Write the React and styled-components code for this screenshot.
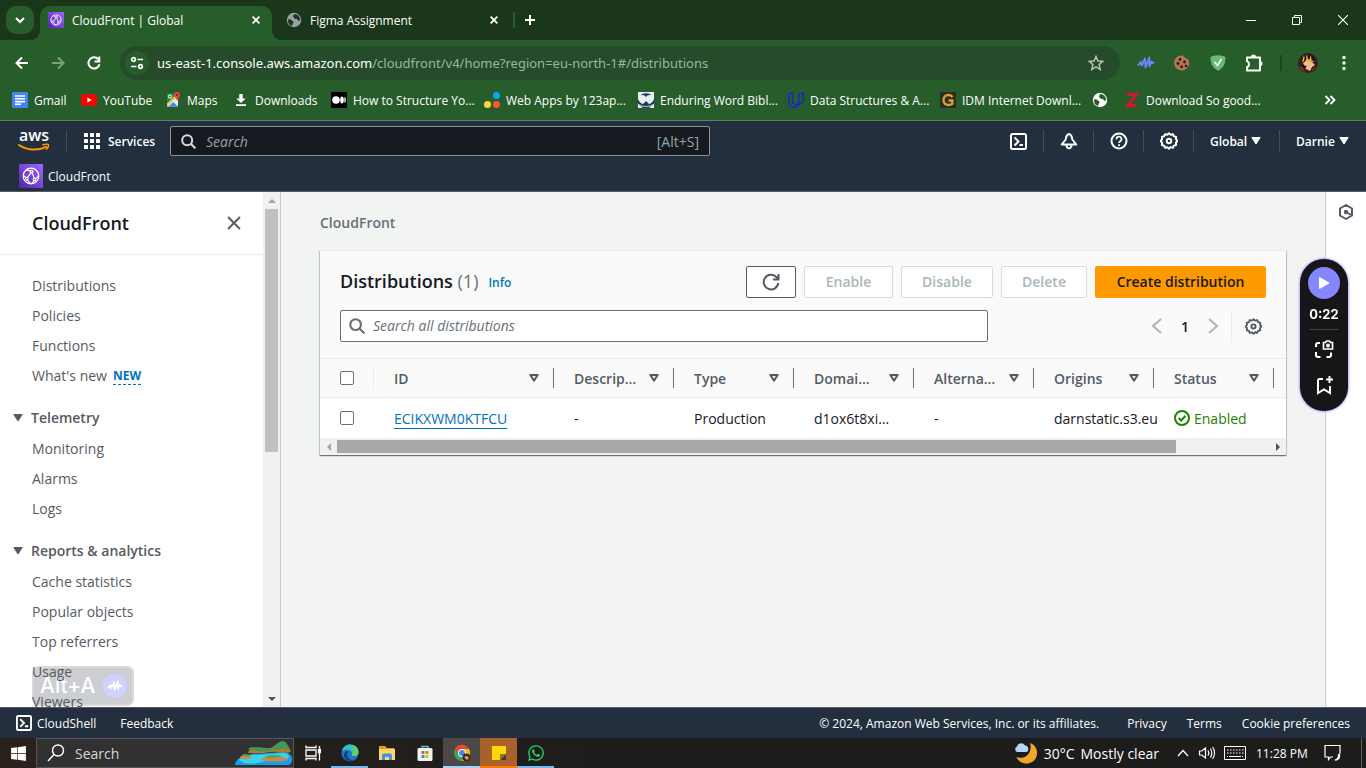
import React from "react";
import styled, { createGlobalStyle, css } from "styled-components";
import { FaWindows, FaWhatsapp } from "react-icons/fa";

const ember = `"Open Sans", "Noto Sans", sans-serif`;
const segoe = `"Open Sans", "Noto Sans", sans-serif`;

const GlobalStyle = createGlobalStyle`
  *, *::before, *::after { box-sizing: border-box; }
  body { margin: 0; overflow: hidden; font-family: ${ember}; color: #16191f; }
  button, input { font: inherit; color: inherit; margin: 0; }
  button { border: 0; padding: 0; background: none; }
  a { color: inherit; text-decoration: none; }
  svg { display: block; flex: none; }
  ul { list-style: none; margin: 0; padding: 0; }
`;

const Screen = styled.div`
  display: flex;
  flex-direction: column;
  height: 100vh;
`;

/* ---------- browser ---------- */

const Browser = styled.header`
  flex: none;
  font-family: ${segoe};
  font-size: 12px;
  color: #fff;
  background: #275d2b;
  border-bottom: 1px solid #57865a;
`;

const TabStrip = styled.div`
  display: flex;
  align-items: flex-end;
  height: 40px;
  background: #1b371b;
`;

const TabSearch = styled.button`
  display: grid;
  place-items: center;
  width: 28px;
  height: 28px;
  margin: 0 6px 6px;
  border-radius: 10px;
  background: #275d2b;
`;

const Tab = styled.div`
  position: relative;
  display: flex;
  align-items: center;
  gap: 8px;
  width: ${(p) => (p.$active ? 232 : 241)}px;
  height: 34px;
  padding: 0 ${(p) => (p.$active ? 9 : 12)}px 6px ${(p) => (p.$active ? 8 : 14)}px;
  border-radius: 10px 10px 0 0;
  ${(p) =>
    p.$active &&
    css`
      background: #275d2b;
      &::before,
      &::after {
        content: "";
        position: absolute;
        bottom: 0;
        width: 10px;
        height: 10px;
      }
      &::before {
        left: -10px;
        background: radial-gradient(circle at 0 0, transparent 10px, #275d2b 10px);
      }
      &::after {
        right: -10px;
        background: radial-gradient(circle at 100% 0, transparent 10px, #275d2b 10px);
      }
    `}
`;

const TabTitle = styled.span`
  flex: 1;
  white-space: nowrap;
`;

const TabDivider = styled.span`
  width: 2px;
  height: 16px;
  margin-bottom: 12px;
  background: #275d2b;
`;

const PlainButton = styled.button`
  display: grid;
  place-items: center;
  width: ${(p) => p.$w || 36}px;
  height: ${(p) => p.$h || 34}px;
`;

const WindowControls = styled.div`
  display: flex;
  margin-left: auto;
`;

const Toolbar = styled.div`
  display: flex;
  align-items: center;
  height: 46px;
  padding: 0 4px;
`;

const AddressBar = styled.div`
  display: flex;
  align-items: center;
  flex: 1;
  height: 34px;
  margin: 0 8px;
  padding: 0 8px 0 5px;
  border-radius: 17px;
  background: #264b2b;
`;

const SiteInfo = styled.span`
  display: grid;
  place-items: center;
  width: 24px;
  height: 24px;
  margin-right: 8px;
  border-radius: 50%;
  background: #275d2b;
`;

const Url = styled.span`
  flex: 1;
  white-space: nowrap;
  color: #9db59f;
  font-family: "Noto Sans", sans-serif;
  font-size: 13px;
  b {
    font-weight: 400;
    color: #fff;
  }
`;

const ToolDivider = styled.span`
  width: 2px;
  height: 16px;
  margin: 0 8px;
  background: #1b471f;
`;

const Bookmarks = styled.nav`
  display: flex;
  align-items: center;
  height: 34px;
  padding: 0 30px 6px 12px;
`;

const Bookmark = styled.a`
  display: flex;
  align-items: center;
  gap: 6px;
  width: ${(p) => p.$w}px;
  white-space: nowrap;
`;

const More = styled.button`
  margin-left: auto;
`;

/* ---------- AWS header ---------- */

const ConsoleHeader = styled.header`
  flex: none;
  background: #232f3e;
  border-bottom: 1px solid #545b64;
  color: #fff;
  font-size: 12px;
  font-weight: 600;
`;

const HeaderRow = styled.div`
  display: flex;
  align-items: center;
  height: 40px;
  padding-left: 18px;
`;

const Rule = styled.span`
  width: 1px;
  height: 22px;
  background: #414d5c;
`;

const LogoRule = styled(Rule)`
  margin-left: 16px;
`;

const Services = styled.button`
  display: flex;
  align-items: center;
  gap: 8px;
  width: 86px;
  margin-left: 17px;
`;

const HeaderSearch = styled.label`
  display: flex;
  align-items: center;
  flex: 0 1 540px;
  height: 30px;
  padding: 0 10px;
  gap: 10px;
  border: 1px solid #879596;
  border-radius: 2px;
  background: #16191f;
  color: #95a5a6;
  font-size: 14px;
  font-weight: 400;
  input {
    flex: 1;
    min-width: 0;
    padding: 0;
    border: 0;
    outline: 0;
    background: none;
  }
  input::placeholder {
    color: #95a5a6;
    font-style: italic;
    opacity: 1;
  }
`;

const HeaderActions = styled.div`
  display: flex;
  align-items: center;
  margin-left: auto;
`;

const HeaderMenu = styled.button`
  display: flex;
  align-items: center;
  gap: 4px;
  width: ${(p) => p.$w}px;
  height: 34px;
  padding-left: 16px;
`;

const Favorite = styled.a`
  display: flex;
  align-items: center;
  gap: 5px;
  height: 30px;
  padding-left: 19px;
  font-weight: 500;
`;

/* ---------- console body ---------- */

const Body = styled.div`
  display: flex;
  flex: 1;
  min-height: 0;
`;

const Sidebar = styled.aside`
  position: relative;
  display: flex;
  flex: 0 0 281px;
  border-right: 1px solid #c8cccd;
  background: #fff;
  color: #545b64;
  font-size: 14px;
`;

const SidebarContent = styled.div`
  flex: 1;
  overflow: hidden;
`;

const SidebarHeader = styled.div`
  display: flex;
  align-items: center;
  justify-content: space-between;
  height: 63px;
  padding: 0 20px 0 32px;
  border-bottom: 1px solid #eaeded;
`;

const SidebarTitle = styled.h2`
  margin: 0;
  font-size: 18px;
  font-weight: 600;
  color: #16191f;
`;

const SideNav = styled.nav`
  position: relative;
  z-index: 1;
  padding-top: 15px;
`;

const NavLink = styled.a`
  display: flex;
  align-items: center;
  gap: 6px;
  height: 30px;
  padding-left: 32px;
`;

const NewTag = styled.span`
  margin-top: 2px;
  border-bottom: 1px dashed #0073bb;
  color: #0073bb;
  font-size: 12px;
  font-weight: 700;
  line-height: 16px;
`;

const SectionToggle = styled.button`
  display: flex;
  align-items: center;
  gap: 8px;
  height: 31px;
  margin-top: 12px;
  padding-left: 13px;
  font-weight: 600;
`;

const VScroll = styled.div`
  display: flex;
  flex-direction: column;
  align-items: center;
  width: 17px;
  background: #f1f1f1;
`;

const ScrollArrow = styled.span`
  display: grid;
  place-items: center;
  width: 17px;
  height: 17px;
`;

const VThumb = styled.span`
  width: 13px;
  height: 243px;
  margin-bottom: auto;
  background: #c1c1c1;
`;

const ShortcutHint = styled.div`
  position: absolute;
  left: 32px;
  bottom: 1px;
  display: flex;
  align-items: center;
  gap: 8px;
  height: 40px;
  width: 102px;
  padding-left: 6px;
  border: 2px solid #d9d9db;
  border-radius: 7px;
  background: #cdced1;
  color: #fff;
  font: 500 21px/36px "Inter", sans-serif;
`;

const HintBadge = styled.span`
  display: grid;
  place-items: center;
  width: 24px;
  height: 24px;
  border-radius: 50%;
  background: #cfd1ff;
`;

const Main = styled.main`
  flex: 1;
  min-width: 0;
  padding: 20px 39px 0;
  background: #f2f3f3;
`;

const Breadcrumb = styled.a`
  display: block;
  height: 22px;
  margin-bottom: 16px;
  color: #687078;
  font-size: 14px;
  font-weight: 600;
  line-height: 22px;
`;

const Card = styled.section`
  border-top: 1px solid #eaeded;
  background: #fff;
  box-shadow: 0 1px 1px rgba(0, 28, 36, 0.4), 1px 1px 1px rgba(0, 28, 36, 0.15), -1px 1px 1px rgba(0, 28, 36, 0.15);
  font-size: 14px;
`;

const CardHeader = styled.div`
  display: flex;
  flex-direction: column;
  gap: 12px;
  padding: 15px 20px 16px;
  background: #fafafa;
  border-bottom: 1px solid #eaeded;
`;

const CardRow = styled.div`
  display: flex;
  align-items: center;
  gap: 8px;
  height: 32px;
`;

const CardTitle = styled.h1`
  margin: 0;
  font-size: 18px;
  font-weight: 600;
  line-height: 30px;
  height: 32px;
  span {
    color: #687078;
    font-weight: 400;
  }
`;

const InfoLink = styled.a`
  margin: 0 auto 0 2px;
  color: #0073bb;
  font-size: 12px;
  font-weight: 600;
`;

const ActionButton = styled.button`
  display: grid;
  place-items: center;
  width: ${(p) => p.$w}px;
  height: 32px;
  padding-bottom: 1px;
  border: 1px solid #545b64;
  border-radius: 2px;
  background: #fff;
  color: #545b64;
  font-weight: 600;
  &:disabled {
    border-color: #d5dbdb;
    color: #aab7b8;
  }
  ${(p) =>
    p.$primary &&
    css`
      border-color: #ff9900;
      background: #ff9900;
      color: #16191f;
    `}
`;

const FilterBox = styled.label`
  display: flex;
  align-items: center;
  gap: 8px;
  flex: 0 1 648px;
  height: 32px;
  padding: 0 8px;
  border: 1px solid #687078;
  border-radius: 2px;
  background: #fff;
  input {
    flex: 1;
    padding: 0 0 1px;
    border: 0;
    outline: 0;
    background: none;
  }
  input::placeholder {
    color: #687078;
    font-style: italic;
    opacity: 1;
  }
`;

const Pager = styled.div`
  display: flex;
  align-items: center;
  margin-left: auto;
  font-weight: 600;
`;

const PagerRule = styled.span`
  width: 1px;
  height: 32px;
  margin: 0 8px 0 4px;
  background: #eaeded;
`;

const GearGrey = styled.span`
  color: #545b64;
`;

const TableWrap = styled.div`
  overflow: hidden;
`;

const Table = styled.table`
  width: 100%;
  min-width: 1100px;
  table-layout: fixed;
  border-collapse: separate;
  border-spacing: 0;
  text-align: left;
  white-space: nowrap;
  th,
  td {
    height: 40px;
    padding: 0 0 0 20px;
  }
  th {
    height: 39px;
    background: #fafafa;
    border-bottom: 1px solid #eaeded;
    color: #545b64;
    font-weight: 600;
  }
`;

const HeadCell = styled.div`
  display: flex;
  align-items: center;
  justify-content: space-between;
  height: 20px;
  padding-right: 14px;
  border-right: 1px solid ${(p) => (p.$light ? "#eaeded" : "#687078")};
`;

const Check = styled.input`
  display: block;
  appearance: none;
  width: 14px;
  height: 14px;
  border: 1px solid #687078;
  border-radius: 2px;
  background: #fff;
`;

const IdLink = styled.a`
  color: #0073bb;
  text-decoration: underline 1px;
  text-underline-offset: 4px;
  text-decoration-skip-ink: none;
`;

const Status = styled.span`
  display: flex;
  align-items: center;
  gap: 4px;
  color: #1d8102;
`;

const HScroll = styled.div`
  display: flex;
  align-items: center;
  height: 17px;
  background: #f1f1f1;
`;

const HTrack = styled.span`
  flex: 1;
`;

const HThumb = styled.span`
  display: block;
  width: 90%;
  height: 13px;
  background: #a8a8a8;
`;

const HelpRail = styled.aside`
  display: flex;
  justify-content: center;
  flex: 0 0 41px;
  padding-top: 12px;
  border-left: 1px solid #c8cccd;
  background: #fff;
`;

/* ---------- recorder ---------- */

const Recorder = styled.div`
  position: fixed;
  top: 259px;
  right: 18px;
  display: flex;
  flex-direction: column;
  align-items: center;
  width: 48px;
  height: 152px;
  padding-top: 8px;
  border-radius: 24px;
  background: #171517;
  box-shadow: 0 0 2px 1px #a9abff;
  color: #fff;
  font: 700 13px/16px "Inter", sans-serif;
`;

const RecordPlay = styled.button`
  display: grid;
  flex: none;
  place-items: center;
  width: 32px;
  height: 32px;
  border-radius: 50%;
  background: #8487ff;
`;

const RecordTime = styled.span`
  margin: 7px 0 9px;
  padding-bottom: 7px;
  border-bottom: 1px solid #414041;
`;

const RecordButton = styled.button`
  margin-bottom: 16px;
`;

/* ---------- footer and taskbar ---------- */

const Footer = styled.footer`
  display: flex;
  align-items: center;
  flex: none;
  gap: 24px;
  height: 31px;
  padding: 0 16px;
  border-top: 1px solid #545b64;
  background: #232f3e;
  color: #fff;
  font-size: 12px;
  font-weight: 500;
`;

const FooterLink = styled.a`
  display: flex;
  align-items: center;
  gap: 5px;
`;

const Legal = styled.div`
  display: flex;
  gap: 20px;
  margin-left: auto;
`;

const Copyright = styled.span`
  margin-right: 8px;
`;

const Taskbar = styled.div`
  display: flex;
  align-items: center;
  flex: none;
  height: 30px;
  background: linear-gradient(90deg, #2a211b, #1d1d1c 45%, #1c1c1b);
  color: #fff;
  font-family: ${segoe};
  font-size: 14px;
`;

const TaskSearch = styled.label`
  display: flex;
  align-items: center;
  gap: 10px;
  width: 258px;
  height: 30px;
  padding-left: 10px;
  border: 1px solid #565656;
  background: #313131;
  input {
    flex: 1;
    min-width: 0;
    padding: 0;
    border: 0;
    outline: 0;
    background: none;
    font-size: 14px;
  }
  input::placeholder {
    color: #d6d6d6;
    opacity: 1;
  }
`;

const TaskButton = styled.button`
  display: grid;
  place-items: center;
  width: ${(p) => p.$w || 37}px;
  height: 30px;
  background: ${(p) => p.$bg || "none"};
  box-shadow: inset 0 -2px ${(p) => p.$line || "transparent"};
`;

const Tray = styled.div`
  display: flex;
  align-items: center;
  margin-left: auto;
  gap: 8px;
  height: 30px;
  padding-right: 20px;
  border-right: 1px solid #5d5d5d;
  margin-right: 4px;
`;

const Clock = styled.span`
  width: 50px;
  margin: 0 10px 0 2px;
  font-size: 12px;
  white-space: nowrap;
  text-align: center;
`;

const Weather = styled.span`
  display: flex;
  align-items: center;
  gap: 6px;
  margin-right: 9px;
  white-space: nowrap;
`;

/* ---------- icons ---------- */

const Svg = ({ w = 16, h = w, box = "0 0 16 16", children, ...rest }) => (
  <svg width={w} height={h} viewBox={box} fill="none" stroke="currentColor" aria-hidden="true" {...rest}>
    {children}
  </svg>
);

const CloudFrontIcon = ({ size }) => (
  <Svg w={size} box="0 0 24 24" stroke="#fff" strokeWidth="1.2">
    <defs>
      <linearGradient id={`cf${size}`} x1="0" y1="1" x2="1" y2="0">
        <stop offset="0" stopColor="#4d27a8" />
        <stop offset="1" stopColor="#a166ff" />
      </linearGradient>
    </defs>
    <path fill={`url(#cf${size})`} stroke="none" d="M0 0h24v24H0z" />
    <circle cx="12" cy="12" r="7.8" />
    <circle cx="12.6" cy="7.6" r="1.3" />
    <circle cx="7.8" cy="14.6" r="1.3" />
    <circle cx="15.6" cy="15.4" r="1.3" />
    <path d="M11.9 8.8 8.5 13.4M13.2 8.8l2 5.3M11.4 7C9.500 6 8 6 7.200 6.100M4.300 11.400c1 .9 2 1.700 2.500 2.200M8.400 15.800c.8 1.700 2 2.900 3.600 3.700M16.700 14.800c1.200-.8 2.200-1.900 2.800-3M15 16.600c-.5 1-1.300 2-2.300 2.800" />
  </Svg>
);

const Globe = ({ color, hole, size = 16 }) => (
  <Svg w={size} stroke="none">
    <circle cx="8" cy="8" r="7.2" fill={color} />
    <path
      fill={hole}
      d="M2.2 7.2C3.5 7 5 7.3 5.6 8.2c.6.9 1.9.7 2 1.800.1 1.100-1 1.400-1.200 2.400-.1.600 0 1.300-.3 1.700A6.200 6.200 0 0 1 2.200 7.200ZM8.300 2c-.2 1.100-1.400 1.400-1.400 2.400 0 .9 1.300.8 1.300 1.700 0 .8.9 1 1.600.8.8-.3 1.600 0 1.700.8.100.7.7 1 1.300 1 .5 0 1-.3 1.300-.6A6 6 0 0 0 8.300 2Z"
    />
  </Svg>
);

const Cross = ({ size = 8, sw = 1.8 }) => (
  <Svg w={size} box="0 0 8 8" strokeWidth={sw}>
    <path d="m.6.6 6.800 6.800M7.400.6.600 7.400" />
  </Svg>
);

const Caret = ({ size = 10, hollow }) => (
  <Svg w={size} box="0 0 10 10" strokeWidth={hollow ? 2 : 1} fill={hollow ? "none" : "currentColor"} strokeLinejoin="round">
    {hollow ? <path d="M1.300 2h7.400L5 7.700z" /> : <path d="M.8 1.500h8.400L5 8z" />}
  </Svg>
);

const Gear = ({ size = 18 }) => (
  <Svg w={size} box="0 0 18 18" strokeWidth="2" strokeLinejoin="round">
    <path d="m9 1.300 1.700 1.500 2.200-.6 1 2.100 2.200.6-.2 2.300 1.500 1.700-1.500 1.800.2 2.300-2.200.6-1 2.100-2.200-.6L9 16.700l-1.700-1.500-2.200.6-1-2.100-2.200-.6.2-2.300L.6 9l1.500-1.800-.2-2.300 2.200-.6 1-2.100 2.200.6z" />
    <circle cx="9" cy="9" r="2.200" />
  </Svg>
);

const Terminal = ({ size = 17 }) => (
  <Svg w={size} box="0 0 17 17" strokeWidth="2">
    <rect x="1" y="1" width="15" height="15" rx="1.500" />
    <path d="m4.500 4.500 4 4-4 4M9.500 12H13" />
  </Svg>
);

const Wave = ({ color, size = 18 }) => (
  <Svg w={size} box="0 0 18 18" stroke={color} strokeWidth="1.900" strokeLinecap="round" strokeLinejoin="round">
    <path d="M1.500 10.800 4 8l.8 3.500L8 4.500l.6 9L12.300 3.500l.2 9 1.800-5 .7 2 1.700-1" />
  </Svg>
);

const Triangle = ({ dir, color }) => {
  const d = { up: "M0 6h8L4 2z", down: "M0 2h8L4 6z", left: "M6 0v8L2 4z", right: "M2 0v8l4-4z" }[dir];
  return (
    <Svg w={8} box="0 0 8 8" stroke="none">
      <path d={d} fill={color} />
    </Svg>
  );
};

/* ---------- data ---------- */

const bookmarks = [
  {
    label: "Gmail",
    w: 69,
    icon: (
      <Svg stroke="#fff" strokeWidth="1.600">
        <rect width="16" height="16" rx="1.500" fill="#4285f4" stroke="none" />
        <path d="M3 4h10M3 6.800h10M3 9.600h10M3 12.300h6" />
      </Svg>
    ),
  },
  {
    label: "YouTube",
    w: 84,
    icon: (
      <Svg stroke="none">
        <rect y="2.200" width="16" height="11.600" rx="3" fill="#f00" />
        <path d="M6.400 5.500v5l4.300-2.500z" fill="#fff" />
      </Svg>
    ),
  },
  {
    label: "Maps",
    w: 68,
    icon: (
      <Svg stroke="none">
        <path fill="#1e8e4e" d="M2 1.500h11v13H2z" />
        <path fill="#e8eaed" d="m2 12 8-8 3 3v7.500H2z" />
        <path fill="#fbc02d" d="m2 11.500 8.500-8 1.500 1.200-10 9.800z" />
        <path fill="#4285f4" d="m4 14.500 4-4.500 5 4.500z" />
        <circle cx="5" cy="4.500" r="1.600" stroke="#fff" />
        <path fill="#ea4335" d="M12 0a3 3 0 0 1 3 3c0 2-2.200 3-3 6-.8-3-3-4-3-6a3 3 0 0 1 3-3Z" />
        <circle cx="12" cy="3" r="1.100" fill="#8c1d14" />
      </Svg>
    ),
  },
  {
    label: "Downloads",
    w: 98,
    icon: (
      <Svg stroke="none" fill="#fff">
        <path d="M6.300 2h3.400v4.500h3L8 11 3.300 6.500h3zM3 12.300h10V14H3z" />
      </Svg>
    ),
  },
  {
    label: "How to Structure Yo...",
    w: 153,
    icon: (
      <Svg stroke="none" fill="#fff">
        <path fill="#000" d="M0 0h16v16H0z" />
        <circle cx="5" cy="8" r="3.800" />
        <ellipse cx="11" cy="8" rx="1.800" ry="3.600" />
        <ellipse cx="14" cy="8" rx=".7" ry="3.200" />
      </Svg>
    ),
  },
  {
    label: "Web Apps by 123ap...",
    w: 154,
    icon: (
      <Svg stroke="none">
        <circle cx="12.500" cy="3.500" r="3.500" fill="#03a9f4" />
        <circle cx="3.500" cy="12.500" r="3.500" fill="#fdd835" />
        <circle cx="12.500" cy="12.500" r="3.500" fill="#ff5722" />
      </Svg>
    ),
  },
  {
    label: "Enduring Word Bibl...",
    w: 150,
    icon: (
      <Svg stroke="none">
        <path fill="#e9eff0" d="M0 0h16v16H0z" />
        <path fill="#133b5c" d="M2 4.500C3 0 13 0 14 4.500c-1-2-5-2-6 1-1-3-5-3-6-1ZM0 7c1 3 3 4.500 5 5l3-3 3 3c2-.5 4-2 5-5v4.500c-2 2.500-5 3.500-8 3.500s-6-1-8-3.500z" />
        <path fill="#9fb6b5" d="M1 12c4 2.500 10 2.500 14 0l-1 2c-3 2-9 2-12 0z" />
        <path fill="#1d2c36" d="M3 14.500c3 1 7 1 10 0L11 16H5z" />
      </Svg>
    ),
  },
  {
    label: "Data Structures & A...",
    w: 152,
    icon: (
      <Svg stroke="#1c1ce0" strokeWidth="1.300">
        <path d="M.8 2.700v6.800c0 3.500 2.300 5.800 5.200 5.800M.8 2.700 4.500.8v8c0 2 .8 3.200 2 3.700M6 15.300c2.500 0 4.500-1.300 5.500-3.300 2.400-.5 3.800-2.300 3.800-4.500V1L11 2.700V9c0 2-1.700 3.500-4 3.500M11.500 12c-1 .5-2.500.5-4.500.5" />
      </Svg>
    ),
  },
  {
    label: "IDM Internet Downl...",
    w: 152,
    icon: (
      <Svg stroke="#d9a520" strokeWidth="2.400">
        <path fill="#2c2c2c" stroke="none" d="M0 0h16v16H0z" />
        <path d="M12.500 5C11.500 3.500 10 3 8.500 3 5.500 3 3.500 5 3.500 8s2 5 5 5c1.500 0 2.700-.4 3.800-1.200V8.500H8.500" />
      </Svg>
    ),
  },
  { label: "", w: 32, icon: <Globe color="#fff" hole="#275d2b" /> },
  {
    label: "Download So good...",
    w: 152,
    icon: (
      <Svg stroke="#e0122d" strokeWidth="2.600">
        <path d="M3 2.600h9.500L4.500 13H12" />
        <path d="M2 14.500h8M12.500 14.500h1.500" strokeWidth="1.400" />
      </Svg>
    ),
  },
];

const sections = [
  { items: ["Distributions", "Policies", "Functions", "What's new"] },
  { title: "Telemetry", items: ["Monitoring", "Alarms", "Logs"] },
  { title: "Reports & analytics", items: ["Cache statistics", "Popular objects", "Top referrers", "Usage", "Viewers"] },
];

const columns = ["ID", "Descrip…", "Type", "Domai…", "Alterna…", "Origins", "Status"];

/* ---------- regions ---------- */

const BrowserChrome = () => (
  <Browser>
    <TabStrip>
      <TabSearch aria-label="Search tabs">
        <Svg w={10} box="0 0 10 10" strokeWidth="2">
          <path d="m1 3 4 4 4-4" />
        </Svg>
      </TabSearch>
      <Tab $active>
        <CloudFrontIcon size={16} />
        <TabTitle>CloudFront | Global</TabTitle>
        <PlainButton $w={14} $h={16} aria-label="Close tab"><Cross /></PlainButton>
      </Tab>
      <Tab>
        <Globe color="#9aa0a6" hole="#1b371b" />
        <TabTitle>Figma Assignment</TabTitle>
        <PlainButton $w={14} $h={16} aria-label="Close tab"><Cross /></PlainButton>
      </Tab>
      <TabDivider />
      <PlainButton $w={30} $h={40} aria-label="New tab">
        <Svg w={12} box="0 0 12 12" strokeWidth="2"><path d="M6 1v10M1 6h10" /></Svg>
      </PlainButton>
      <WindowControls>
        <PlainButton $w={46} $h={40} aria-label="Minimize">
          <Svg w={10} box="0 0 10 10"><path d="M0 5.500h10" /></Svg>
        </PlainButton>
        <PlainButton $w={46} $h={40} aria-label="Restore">
          <Svg w={10} box="0 0 10 10"><path d="M.5 2.500h7v7h-7zM2.500 2.500v-2h7v7h-2" /></Svg>
        </PlainButton>
        <PlainButton $w={46} $h={40} aria-label="Close">
          <Svg w={10} box="0 0 10 10" strokeWidth="1.100"><path d="m0 0 10 10M10 0 0 10" /></Svg>
        </PlainButton>
      </WindowControls>
    </TabStrip>
    <Toolbar>
      <PlainButton aria-label="Back">
        <Svg strokeWidth="2"><path d="M14 8H3M8 2.500 2.500 8 8 13.500" /></Svg>
      </PlainButton>
      <PlainButton aria-label="Forward">
        <Svg strokeWidth="2" stroke="#7c9f7e"><path d="M2 8h11M8 2.500 13.500 8 8 13.500" /></Svg>
      </PlainButton>
      <PlainButton aria-label="Reload">
        <Svg strokeWidth="2"><path d="M13.500 9.300A5.600 5.600 0 1 1 12.300 4.300L13.500 5.800M13.300 1.500v5H8.500" /></Svg>
      </PlainButton>
      <AddressBar>
        <SiteInfo>
          <Svg w={14} box="0 0 14 14" strokeWidth="1.700">
            <circle cx="3.500" cy="3.500" r="1.800" />
            <path d="M7.500 3.500H13M1 10.500h5.500" />
            <circle cx="10.500" cy="10.500" r="1.800" />
          </Svg>
        </SiteInfo>
        <Url><b>us-east-1.console.aws.amazon.com</b>/cloudfront/v4/home?region=eu-north-1#/distributions</Url>
        <PlainButton $w={32} aria-label="Bookmark">
          <Svg stroke="#b5c2b6" strokeWidth="1.500"><path d="m8 1.500 1.900 4.500 4.900.4-3.700 3.200 1.100 4.800L8 11.900l-4.200 2.500 1.100-4.800L1.200 6.400l4.900-.4z" /></Svg>
        </PlainButton>
      </AddressBar>
      <PlainButton aria-label="Recorder"><Wave color="#6f86f8" /></PlainButton>
      <PlainButton aria-label="Cookies">
        <Svg stroke="none">
          <path fill="#b77450" d="M8.500.5c1 1.300 2.200 1 3 2.500.8 1 1.600.8 2.700 1.500A7.500 7.500 0 1 1 8.500.5Z" />
          <g fill="#2b1a17"><circle cx="6" cy="4.500" r="1.400" /><circle cx="10.500" cy="7" r="1.400" /><circle cx="4" cy="8.500" r="1.400" /><circle cx="7.500" cy="11.800" r="1.400" /><circle cx="12" cy="11" r="1.300" /></g>
        </Svg>
      </PlainButton>
      <PlainButton aria-label="Ad blocker">
        <Svg stroke="none">
          <path fill="#68bc71" d="M8 .3c3 0 5.500.8 7.500 1.600 0 6-1.500 10.500-7.500 13.800C2 12.400.5 7.900.5 1.900 2.500 1.100 5 .3 8 .3Z" />
          <path d="m4.500 7 3 3.500L11.500 4" stroke="#fff" strokeWidth="1.600" />
        </Svg>
      </PlainButton>
      <PlainButton aria-label="Extensions">
        <Svg w={18} box="0 0 18 18" strokeWidth="2">
          <path fill="#fff" stroke="none" d="M6 3a2.500 2.500 0 0 1 5 0zM15 7a2.500 2.500 0 0 1 0 5z" />
          <path d="M2 3.500h13v13H2v-3.300a3.200 3.200 0 0 0 0-6z" strokeLinejoin="round" />
        </Svg>
      </PlainButton>
      <ToolDivider />
      <PlainButton aria-label="Profile">
        <Svg w={20} box="0 0 20 20" stroke="none">
          <circle cx="10" cy="10" r="10" fill="#3a1c22" />
          <path fill="#e8c08e" d="m5 10 4-3 5 2 3 3-3 2-2 4-4-2z" />
          <path fill="#e6b73c" d="m4 9 2-7 1.500 4L9 1.500l1 5L13 3l.5 4 3 2-5.500-.5-4-1z" />
          <path fill="#14090c" d="m7 1 1.500 5L6 9zM11 .5l1 6-2-1zM3 12l6 1-3 3zM14 3l3 3-2 1z" />
          <path fill="#86291f" d="m1 13 4 1 2 5C4 18 2 16 1 13ZM14 16l4-3c-1 3-2 4-4 5z" />
        </Svg>
      </PlainButton>
      <PlainButton aria-label="Menu">
        <Svg stroke="none" fill="#fff"><circle cx="8" cy="2.500" r="1.700" /><circle cx="8" cy="8" r="1.700" /><circle cx="8" cy="13.500" r="1.700" /></Svg>
      </PlainButton>
    </Toolbar>
    <Bookmarks aria-label="Bookmarks">
      {bookmarks.map((b) => (
        <Bookmark key={b.label} href="#" $w={b.w} aria-label={b.label || "Site"}>
          {b.icon}
          {b.label}
        </Bookmark>
      ))}
      <More aria-label="More bookmarks">
        <Svg w={12} box="0 0 12 12" strokeWidth="1.800"><path d="m1.500 2 4 4-4 4M6.500 2l4 4-4 4" /></Svg>
      </More>
    </Bookmarks>
  </Browser>
);

const AwsHeader = () => (
  <ConsoleHeader>
    <HeaderRow>
      <Svg w={32} h={38} box="0 0 32 38" stroke="none" role="img">
        <text x="1" y="19" fill="#fff" fontFamily="Open Sans, sans-serif" fontSize="16" fontWeight="600">aws</text>
        <path d="M1 23c8 5.500 19 6 27 1.800" stroke="#ff9900" strokeWidth="2" strokeLinecap="round" />
        <path d="M25 22.800c2.500-.7 4.800-.8 5.300-.2.500.7-.3 3-1.800 4.700" stroke="#ff9900" strokeWidth="1.500" strokeLinecap="round" />
      </Svg>
      <LogoRule />
      <Services>
        <Svg w={16} stroke="none" fill="#fff">
          {[0, 6, 12].map((y) => [0, 6, 12].map((x) => <rect key={`${x}-${y}`} x={x} y={y} width="4" height="4" rx=".6" />))}
        </Svg>
        Services
      </Services>
      <HeaderSearch>
        <Svg w={15} box="0 0 15 15" stroke="#d5dbdb" strokeWidth="2"><circle cx="6.200" cy="6.200" r="5" /><path d="m9.800 9.800 4.600 4.600" /></Svg>
        <input type="search" placeholder="Search" aria-label="Search" />
        [Alt+S]
      </HeaderSearch>
      <HeaderActions>
        <PlainButton $w={49} aria-label="CloudShell"><Terminal /></PlainButton>
        <Rule />
        <PlainButton $w={49} aria-label="Notifications">
          <Svg w={18} box="0 0 18 18" strokeWidth="2" strokeLinejoin="round">
            <path d="M9 2C6.800 2.500 6 4.500 5.700 7.500L1.700 12.500h14.600L12.300 7.500C12 4.500 11.200 2.500 9 2ZM6.500 12.500c0 2.500.8 3.800 2.500 3.800s2.500-1.300 2.500-3.800" />
          </Svg>
        </PlainButton>
        <Rule />
        <PlainButton $w={49} aria-label="Help">
          <Svg w={18} box="0 0 18 18" strokeWidth="2"><circle cx="9" cy="9" r="7.500" /><path d="M6.500 7.300a2.500 2.500 0 1 1 4.200 1.600C9.700 9.600 9 9.800 9 11M9 12.200v1.900" strokeWidth="1.800" /></Svg>
        </PlainButton>
        <Rule />
        <PlainButton $w={49} aria-label="Settings"><Gear /></PlainButton>
        <Rule />
        <HeaderMenu $w={85}>Global <Caret /></HeaderMenu>
        <Rule />
        <HeaderMenu $w={86}>Darnie <Caret /></HeaderMenu>
      </HeaderActions>
    </HeaderRow>
    <Favorite href="#"><CloudFrontIcon size={24} />CloudFront</Favorite>
  </ConsoleHeader>
);

const ConsoleSidebar = () => (
  <Sidebar>
    <ShortcutHint>Alt+A<HintBadge><Wave color="#fff" size={16} /></HintBadge></ShortcutHint>
    <SidebarContent>
      <SidebarHeader>
        <SidebarTitle>CloudFront</SidebarTitle>
        <PlainButton $w={18} $h={18} aria-label="Close navigation"><Cross size={14} sw={1.1} /></PlainButton>
      </SidebarHeader>
      <SideNav>
        {sections.map((s, i) => (
          <React.Fragment key={i}>
            {s.title && <SectionToggle><Caret size={10} />{s.title}</SectionToggle>}
            <ul>
              {s.items.map((item) => (
                <li key={item}>
                  <NavLink href="#">
                    {item}
                    {item === "What's new" && <NewTag>NEW</NewTag>}
                  </NavLink>
                </li>
              ))}
            </ul>
          </React.Fragment>
        ))}
      </SideNav>
    </SidebarContent>
    <VScroll>
      <ScrollArrow><Triangle dir="up" color="#a3a3a3" /></ScrollArrow>
      <VThumb />
      <ScrollArrow><Triangle dir="down" color="#505050" /></ScrollArrow>
    </VScroll>
  </Sidebar>
);

const Distributions = () => (
  <Card>
    <CardHeader>
      <CardRow>
        <CardTitle>Distributions <span>(1)</span></CardTitle>
        <InfoLink href="#">Info</InfoLink>
        <ActionButton $w={50} aria-label="Refresh">
          <Svg w={18} box="0 0 18 18" strokeWidth="2"><path d="M16.300 10A7.300 7.300 0 1 1 14 3.700L16 6M16.500 1v5.500H11" /></Svg>
        </ActionButton>
        <ActionButton $w={89} disabled>Enable</ActionButton>
        <ActionButton $w={92} disabled>Disable</ActionButton>
        <ActionButton $w={86} disabled>Delete</ActionButton>
        <ActionButton $w={171} $primary>Create distribution</ActionButton>
      </CardRow>
      <CardRow>
        <FilterBox>
          <Svg w={16} box="0 0 15 15" stroke="#687078" strokeWidth="2"><circle cx="6.200" cy="6.200" r="5" /><path d="m9.800 9.800 4.600 4.600" /></Svg>
          <input type="search" placeholder="Search all distributions" aria-label="Search all distributions" />
        </FilterBox>
        <Pager>
          <PlainButton $w={28} aria-label="Previous page">
            <Svg w={16} stroke="#aab7b8" strokeWidth="2"><path d="M12 1 4 8l8 7" /></Svg>
          </PlainButton>
          <PlainButton $w={28}>1</PlainButton>
          <PlainButton $w={28} aria-label="Next page">
            <Svg w={16} stroke="#aab7b8" strokeWidth="2"><path d="m4 1 8 7-8 7" /></Svg>
          </PlainButton>
          <PagerRule />
          <PlainButton $w={26} aria-label="Preferences"><GearGrey><Gear size={17} /></GearGrey></PlainButton>
        </Pager>
      </CardRow>
    </CardHeader>
    <TableWrap>
      <Table>
        <colgroup>
          <col width="54" />
          <col width="180" />
          {columns.slice(1).map((c) => <col key={c} width="120" />)}
          <col />
        </colgroup>
        <thead>
          <tr>
            <th><HeadCell $light><Check type="checkbox" aria-label="Select all" /></HeadCell></th>
            {columns.map((c) => (
              <th key={c}><HeadCell>{c}<Caret size={10} hollow /></HeadCell></th>
            ))}
            <th />
          </tr>
        </thead>
        <tbody>
          <tr>
            <td><Check type="checkbox" aria-label="Select ECIKXWM0KTFCU" /></td>
            <td><IdLink href="#">ECIKXWM0KTFCU</IdLink></td>
            <td>-</td>
            <td>Production</td>
            <td>d1ox6t8xi…</td>
            <td>-</td>
            <td>darnstatic.s3.eu</td>
            <td>
              <Status>
                <Svg strokeWidth="2"><circle cx="8" cy="8" r="7" /><path d="m4.700 8 2.500 2.500 4.200-4.700" /></Svg>
                Enabled
              </Status>
            </td>
            <td />
          </tr>
        </tbody>
      </Table>
    </TableWrap>
    <HScroll>
      <ScrollArrow><Triangle dir="left" color="#a3a3a3" /></ScrollArrow>
      <HTrack><HThumb /></HTrack>
      <ScrollArrow><Triangle dir="right" color="#505050" /></ScrollArrow>
    </HScroll>
  </Card>
);

const RecorderWidget = () => (
  <Recorder>
    <RecordPlay aria-label="Play">
      <Svg w={14} box="0 0 14 14" fill="#fff" stroke="#fff" strokeLinejoin="round"><path d="M2.500 1.500v11L12 7z" /></Svg>
    </RecordPlay>
    <RecordTime>0:22</RecordTime>
    <RecordButton aria-label="Screenshot">
      <Svg w={20} box="0 0 20 20" strokeWidth="2">
        <path d="M2 8V6c0-1.200.5-2 2-2h2M2 13v3c0 1.200.8 2 2 2h2.500M12.500 18H15c1.200 0 2-.8 2-2v-2.500" />
        <path d="M9.500 3.500h2l1-1.500h3l1 1.500h2V10h-9z" strokeWidth="1.700" />
        <circle cx="14" cy="6.500" r="1" />
      </Svg>
    </RecordButton>
    <RecordButton aria-label="Bookmark">
      <Svg w={20} box="0 0 20 20" strokeWidth="2">
        <path d="M9 4H5.500C4.500 4 4 4.500 4 5.500V18l6-3.500 6 3.500v-7M15.500 1v7M12 4.500h7" />
      </Svg>
    </RecordButton>
  </Recorder>
);

const ConsoleFooter = () => (
  <Footer>
    <FooterLink href="#"><Terminal size={16} />CloudShell</FooterLink>
    <FooterLink href="#">Feedback</FooterLink>
    <Legal>
      <Copyright>© 2024, Amazon Web Services, Inc. or its affiliates.</Copyright>
      <FooterLink href="#">Privacy</FooterLink>
      <FooterLink href="#">Terms</FooterLink>
      <FooterLink href="#">Cookie preferences</FooterLink>
    </Legal>
  </Footer>
);

const WindowsTaskbar = () => (
  <Taskbar>
    <TaskButton $w={36} aria-label="Start"><FaWindows size={17} /></TaskButton>
    <TaskSearch>
      <Svg w={18} box="0 0 18 18" strokeWidth="1.400"><circle cx="11" cy="6.500" r="5.500" /><path d="M7 10.500 1 17" /></Svg>
      <input type="search" placeholder="Search" aria-label="Search Windows" />
      <Svg w={58} h={24} box="0 0 58 24" stroke="none">
        <path fill="#1e9bf0" d="M0 24c1-7 8-10 18-11l30-2c6 0 10 4 9 9-.5 2-1.500 3-3 4z" />
        <path fill="#35d6e6" d="M4 19c4-5 12-5 18-5l26-2c5 0 7 3 5 6-8 3-18-1-26 3-8 2-17 3-23-2z" />
        <path fill="#b5762f" d="M13 12c1-4 3-5 6-4l7-1 8 1 5-3 6-4c4-1 6 1 8 4l3 6c-7 2-13-1-19 0-8 1-17 2-24 1Z" />
        <path fill="#3f9a57" d="M13 8c3-3 7-1 10-2l7 1 8 0 5-5c4-3 8-2 9 1l3 5c-4 1-6-2-9 0-4 2-8 0-12 2-7 1-14 0-21-2Z" />
        <path fill="#c98a41" d="M5 16c3-3 9-2 12 0-2 3-10 3-12 0ZM26 18c6-4 19-3 25-1 3 1 1 3-2 3-8 0-18 2-23-2Z" />
        <path fill="#4da35a" d="M7 14c3-2 6-1 8 1-3 1-6 0-8-1ZM30 16c4-3 12-2 18-1-5 2-12 2-18 1Z" />
      </Svg>
    </TaskSearch>
    <TaskButton aria-label="Task view">
      <Svg w={16} strokeWidth="1.300"><path d="M1 .5v2h10v-2M1 5h10v6H1zM1 15.500v-2h10v2M14.500 1v2.500M14.500 8v7.500" /><path d="M13.500 4.500h2v3h-2z" fill="#fff" /></Svg>
    </TaskButton>
    <TaskButton $line="#76b9ed" aria-label="Edge">
      <Svg w={18} box="0 0 18 18" stroke="none">
        <circle cx="9" cy="9" r="8.500" fill="#1b78c8" />
        <path fill="#35c1c6" d="M.8 7C2 3 5 .5 9 .5c5 0 8.500 3.500 8.500 7.500 0 2.500-2 4-4 4-2.500 0-3-1-2.500-2 .8-3-4-6-10.200-3Z" />
        <path fill="#63d35c" d="M12 1c3.500 1.300 5.500 4 5.500 7s-2.500 4-4 4c-2 0-3-1-2.500-2C13 8 13 4 12 1Z" />
        <path fill="#123f86" d="M6.500 9c-1 4 2 7.500 6 7-4 2.500-10-.5-9.500-5.500C3.300 8 5 7 7.500 7Z" />
      </Svg>
    </TaskButton>
    <TaskButton $w={38} aria-label="File Explorer">
      <Svg w={18} box="0 0 18 18" stroke="none">
        <path fill="#dba31c" d="M1 2h6l2 2h7v4H1z" /><path fill="#ffd768" d="M1 5h16v11H1z" />
        <path fill="#3e95e0" d="M4 16v-4.500C4 10 5 9.500 6 9.500h6c1 0 2 .5 2 2V16h-3v-3H7v3z" />
      </Svg>
    </TaskButton>
    <TaskButton aria-label="Microsoft Store">
      <Svg w={16} stroke="none">
        <path d="M5 4V1.500h6V4" stroke="#4cc2f1" strokeWidth="1.400" /><rect x=".5" y="3" width="15" height="13" rx="1.500" fill="#f2f2f2" />
        <path fill="#f25022" d="M4.500 6h3v3h-3z" /><path fill="#7fba00" d="M8.500 6h3v3h-3z" /><path fill="#00a4ef" d="M4.500 10h3v3h-3z" /><path fill="#ffb900" d="M8.500 10h3v3h-3z" />
      </Svg>
    </TaskButton>
    <TaskButton $bg="#4b4845" $line="#a6d2f5" aria-label="Chrome">
      <Svg w={18} box="0 0 18 18" stroke="none">
        <circle cx="9" cy="9" r="8" fill="#34a853" />
        <path fill="#ea4335" d="M2 5a8 8 0 0 1 14 0H9L6 11z" />
        <path fill="#fbbc04" d="M9 5h7a8 8 0 0 1-7.500 12L12 11z" />
        <circle cx="9" cy="9" r="4" fill="#fff" /><circle cx="9" cy="9" r="3" fill="#4285f4" />
        <circle cx="13.500" cy="13.500" r="4" fill="#4a241d" /><path fill="#dba66c" d="m11 13 3-1 2 2-2 2z" />
      </Svg>
    </TaskButton>
    <TaskButton $bg="#a9602a" $line="#ff7a00" aria-label="Sticky Notes">
      <Svg w={16} stroke="none"><path fill="#ffd60a" d="M1 1h14v8l-6 6H1z" /><path fill="#3d3a36" d="M15 9v6H9z" /><path fill="#8a7624" d="M9 9h6l-6 6z" /></Svg>
    </TaskButton>
    <TaskButton $line="#76b9ed" aria-label="WhatsApp"><FaWhatsapp size={18} color="#25d366" /></TaskButton>
    <Tray>
      <Weather>
        <Svg w={24} box="0 0 24 24" stroke="none">
          <path fill="#f4a62a" d="M16 2c5 2 7.500 6 7 11-.7 6-5 9.500-10.500 9.500C8 22.500 4 20 2.500 16c3 1.500 8 1 11-2s4-8 2.500-12Z" />
          <path fill="#b9d3f8" d="M3 11a3 3 0 0 1 0-5.500C4 2 9 1 11 4.500c3-.5 5 5 1.500 6.500z" />
        </Svg>
        <span>30°C</span>
        <span>Mostly clear</span>
      </Weather>
      <Svg w={14} box="0 0 14 14" strokeWidth="1.300"><path d="m2 10 5-5.500 5 5.500" /></Svg>
      <Svg w={18} box="0 0 18 18" strokeWidth="1.200"><path d="M1.500 7v4h2.300L7.500 14V4L3.800 7zM10 6.500c1 1.500 1 3.500 0 5M12.300 4.500c2 2.500 2 6.500 0 9M14.600 3c2.600 3.500 2.600 8.500 0 12" /></Svg>
      <Svg w={22} h={14} box="0 0 22 14"><path d="M.5.5h21v13H.5z" /><path d="M3 4h16.500M3 7h16.500" strokeDasharray="1.500 1.500" /><path d="M5 10.500h12M3 10.500h1M18 10.500h1" /></Svg>
      <Clock>11:28 PM</Clock>
      <Svg w={17} h={18} box="0 0 17 18" strokeWidth="1.200"><path d="M9 13H6.500l-2 2.500V13H1V1.500h15v8" /><path d="M15.500 10c1 3.500-1 6.500-4.500 6 2.500-.8 3.800-3 3.500-5.500z" fill="#fff" /></Svg>
    </Tray>
  </Taskbar>
);

export default function App() {
  return (
    <Screen>
      <GlobalStyle />
      <BrowserChrome />
      <AwsHeader />
      <Body>
        <ConsoleSidebar />
        <Main>
          <Breadcrumb href="#">CloudFront</Breadcrumb>
          <Distributions />
        </Main>
        <HelpRail>
          <GearGrey>
            <Svg strokeWidth="2"><path d="M8 1 14 4.500v7L8 15l-6-3.500v-7z" strokeLinejoin="round" /><path d="m8 8 5 3" /><circle cx="8" cy="8" r="1.200" fill="currentColor" /></Svg>
          </GearGrey>
        </HelpRail>
      </Body>
      <ConsoleFooter />
      <WindowsTaskbar />
      <RecorderWidget />
    </Screen>
  );
}
